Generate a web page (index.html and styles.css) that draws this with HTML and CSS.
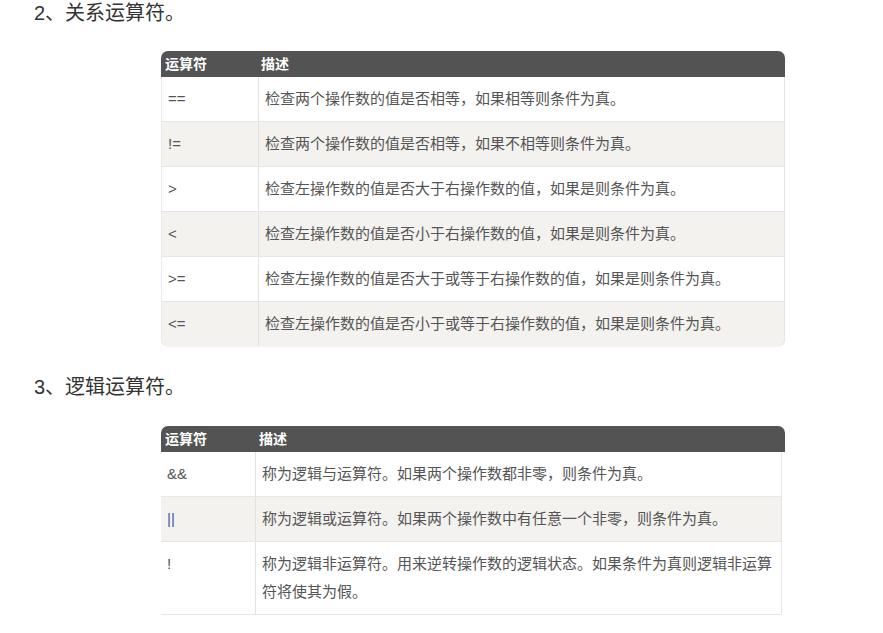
FILE: index.html
```html
<!DOCTYPE html>
<html lang="zh">
<head>
<meta charset="utf-8">
<link rel="stylesheet" href="styles.css">
</head>
<body>
<h3 class="heading first">2、关系运算符。</h3>
<div class="tbl t1">
  <div class="tr head"><div class="c1">运算符</div><div class="c2">描述</div></div>
  <div class="tr"><div class="c1">==</div><div class="c2">检查两个操作数的值是否相等，如果相等则条件为真。</div></div>
  <div class="tr alt"><div class="c1">!=</div><div class="c2">检查两个操作数的值是否相等，如果不相等则条件为真。</div></div>
  <div class="tr"><div class="c1">&gt;</div><div class="c2">检查左操作数的值是否大于右操作数的值，如果是则条件为真。</div></div>
  <div class="tr alt"><div class="c1">&lt;</div><div class="c2">检查左操作数的值是否小于右操作数的值，如果是则条件为真。</div></div>
  <div class="tr"><div class="c1">&gt;=</div><div class="c2">检查左操作数的值是否大于或等于右操作数的值，如果是则条件为真。</div></div>
  <div class="tr alt last"><div class="c1">&lt;=</div><div class="c2">检查左操作数的值是否小于或等于右操作数的值，如果是则条件为真。</div></div>
</div>
<h3 class="heading">3、逻辑运算符。</h3>
<div class="tbl t2">
  <div class="tr head"><div class="c1">运算符</div><div class="c2">描述</div></div>
  <div class="tr"><div class="c1">&amp;&amp;</div><div class="c2">称为逻辑与运算符。如果两个操作数都非零，则条件为真。</div></div>
  <div class="tr alt"><div class="c1 pipe">||</div><div class="c2">称为逻辑或运算符。如果两个操作数中有任意一个非零，则条件为真。</div></div>
  <div class="tr"><div class="c1">!</div><div class="c2">称为逻辑非运算符。用来逆转操作数的逻辑状态。如果条件为真则逻辑非运算符将使其为假。</div></div>
</div>
</body>
</html>
```
FILE: styles.css
```css
html, body {
  margin: 0;
  padding: 0;
  background: #fff;
}
body {
  font-family: "Liberation Sans", "Noto Sans CJK SC", sans-serif;
  color: #333;
}
.heading {
  margin: 0;
  padding-left: 34px;
  font-size: 20px;
  font-weight: normal;
  line-height: 26px;
  color: #333;
}
.t1 + .heading {
  margin-top: 27px;
}
.tbl {
  width: 624px;
  margin-left: 161px;
  font-size: 15px;
  color: #555;
}
.t1 {
  margin-top: 25px;
}
.t2 {
  margin-top: 26px;
}
.tr {
  display: grid;
  grid-template-columns: 96px 1fr;
  background: #fff;
  border-bottom: 1px solid #e6e6e6;
  border-left: 1px solid #eaeaea;
  border-right: 1px solid #e6e6e6;
}
.tr.alt {
  background: #f3f2ef;
}
.tr > div {
  padding: 8px 4px 8px 6px;
  line-height: 28px;
}
.tr > .c2 {
  border-left: 1px solid #e2e2e2;
  padding-left: 6px;
}
.tr.head {
  background: #535353;
  color: #fff;
  font-weight: bold;
  font-size: 14px;
  border: none;
  border-radius: 7px 7px 0 0;
  height: 26px;
}
.tr.head > div {
  padding: 0 0 0 4px;
  line-height: 26px;
  border-left: none;
}
.t1 .tr.last {
  border-radius: 0 0 7px 7px;
  border-bottom: 1px solid transparent;
}
.t2 .tr {
  grid-template-columns: 94px 1fr;
  border-left: none;
}
.t2 .tr:not(.head) {
  width: 620px;
}
.t2 .tr > .c2 {
  padding-right: 2px;
}
.pipe {
  color: #3d5aa8;
}
```
